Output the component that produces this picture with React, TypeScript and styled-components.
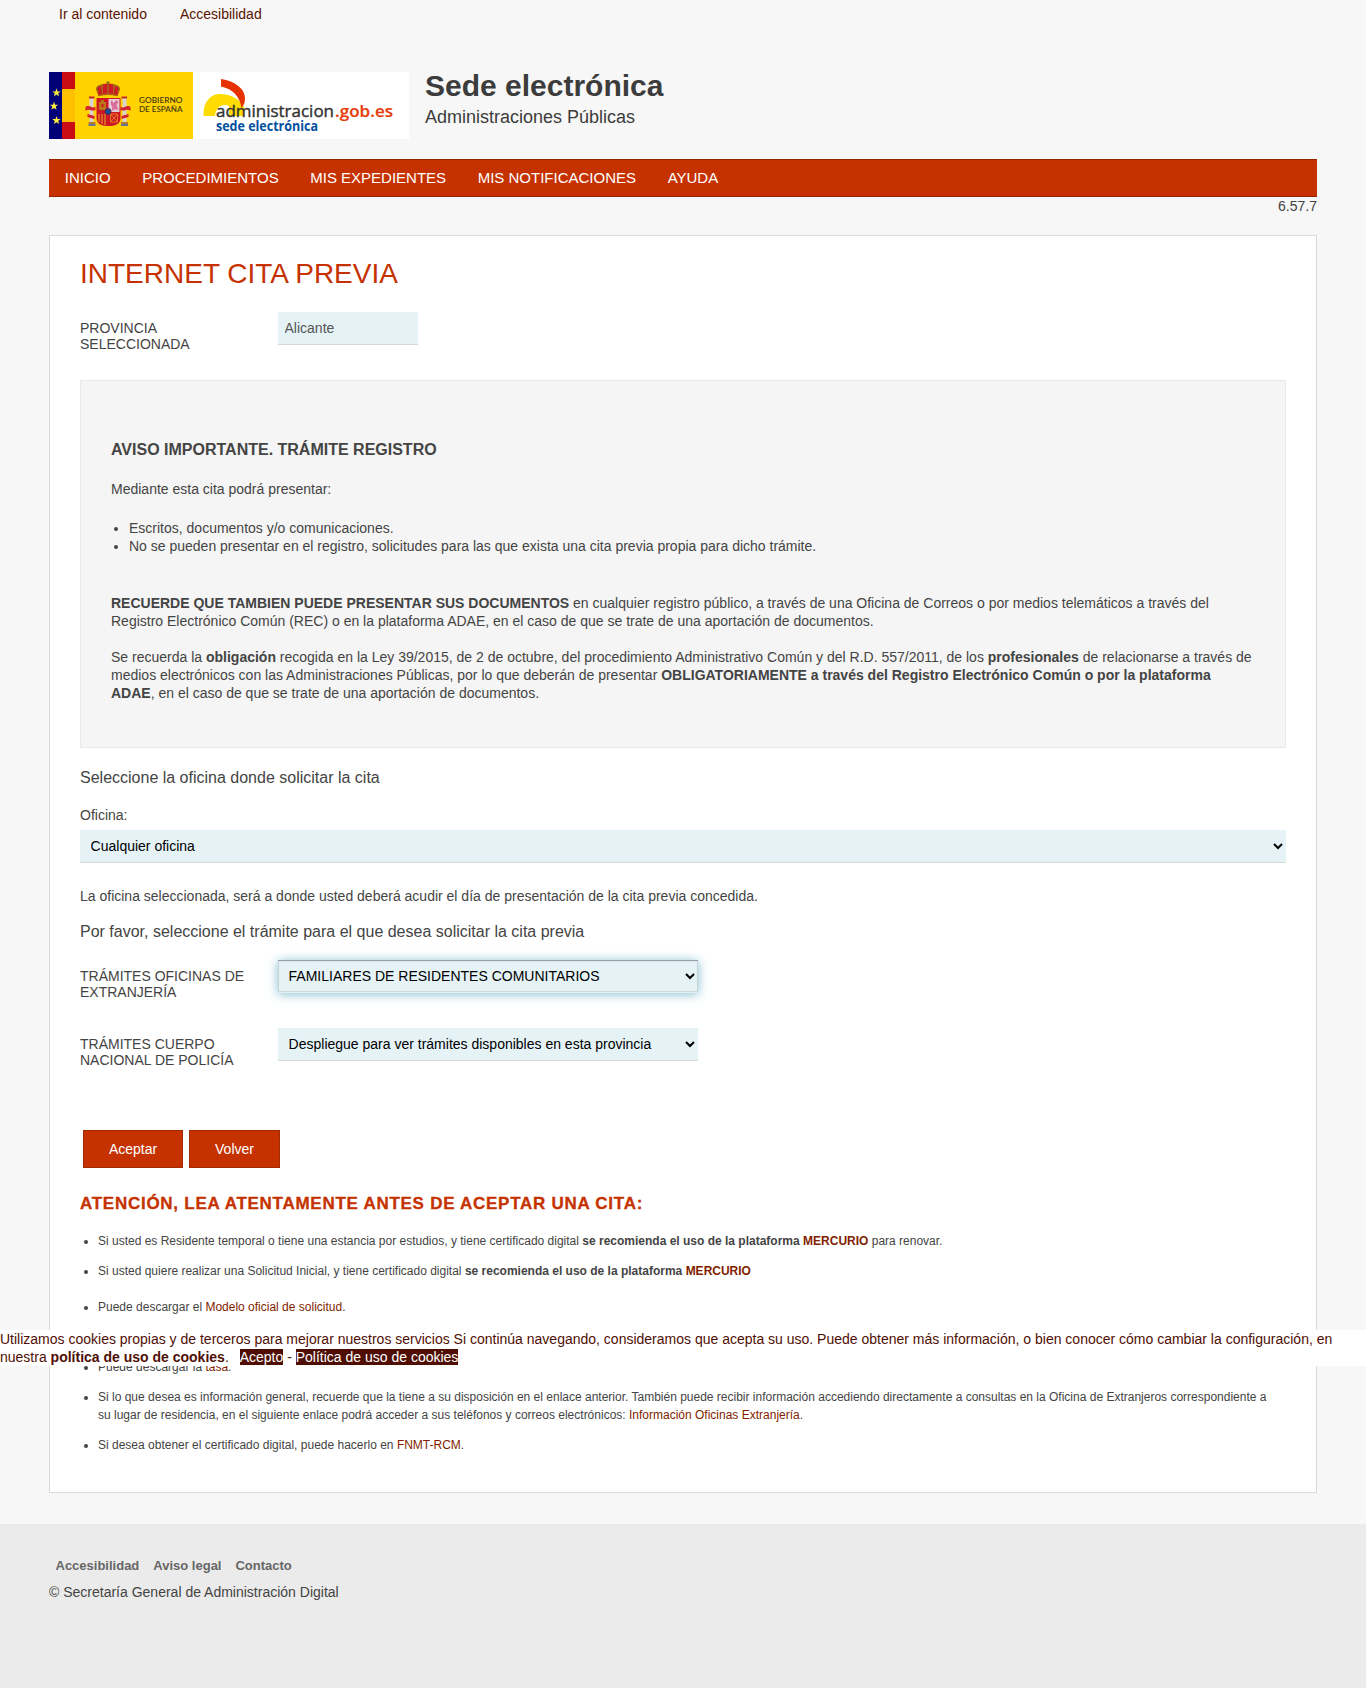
import React from 'react';
import styled, { createGlobalStyle, css } from 'styled-components';

const GlobalStyle = createGlobalStyle`
  body {
    margin: 0;
    background: #f7f7f7;
    color: #444;
    font: 14px/18px "Liberation Sans", Arial, sans-serif;
  }
  a { color: #811e00; text-decoration: none; }
`;

const Page = styled.div`
  display: flex;
  flex-direction: column;
  min-height: 1688px;
`;
const Container = styled.div`
  width: 1268px;
  margin: 0 auto;
`;
const SkipLinks = styled.nav`
  display: flex;
  gap: 33px;
  height: 72px;
  padding: 5px 0 0 10px;
  box-sizing: border-box;
  a { color: #5a1400; }
`;
const Brand = styled.header`
  display: flex;
  gap: 16px;
  height: 87px;
`;
const BrandTitle = styled.div`
  display: flex;
  flex-direction: column;
  color: #3c3c3c;
`;
const SiteName = styled.strong`
  font-size: 30px;
  line-height: 34px;
  margin-top: -3px;
`;
const SiteSub = styled.span`
  font-size: 18px;
  line-height: 28px;
`;
const MainNav = styled.nav`
  display: flex;
  height: 38px;
  box-sizing: border-box;
  background: #c53200;
  border: solid #952600;
  border-width: 1px 0;
  a {
    padding: 0 15.8px;
    color: #fff;
    font-size: 15px;
    line-height: 36px;
  }
`;
const Version = styled.div`
  height: 38px;
  text-align: right;
`;
const Card = styled.main`
  box-sizing: border-box;
  height: 1258px;
  padding: 22px 30px 0;
  background: #fff;
  border: 1px solid #d9d9d9;
`;
const Title = styled.h1`
  margin: 0;
  font-size: 28px;
  font-weight: 400;
  line-height: 32px;
  color: #c53200;
`;
const Field = styled.div<{ $top: number }>`
  display: flex;
  align-items: flex-start;
  height: 33px;
  margin-top: ${p => p.$top}px;
`;
const FieldLabel = styled.label`
  width: 198px;
  padding: 8px 30px 0 0;
  box-sizing: border-box;
  line-height: 16px;
`;
const control = css`
  box-sizing: border-box;
  height: 33px;
  border: 0;
  border-bottom: 1px solid #d5d9da;
  border-radius: 0;
  background-color: #e5f3f7;
  font: 14px "Liberation Sans", Arial, sans-serif;
  outline: 0;
`;
const ReadOnly = styled.input`
  ${control}
  width: 140px;
  padding: 0 6.5px;
  color: #555;
`;
const Select = styled.select<{ $width: string; $active?: boolean }>`
  ${control}
  width: ${p => p.$width};
  padding: 0 1px 0 6.6px;
  color: #000;
  ${p => p.$active && css`
    border-bottom-color: #e3f1f5;
    box-shadow: inset 0 1px 1px #8d9a9e, inset 0 0 1px 1px rgba(0, 0, 0, 0.1), 0 1px 10px #7fbccf;
  `}
`;
const Notice = styled.section`
  box-sizing: border-box;
  height: 368px;
  margin-top: 35px;
  padding: 59px 30px 0;
  background: #f5f5f5;
  border: 1px solid #e8e8e8;
`;
const NoticeTitle = styled.h2`
  margin: 0 0 20px;
  font-size: 16px;
  line-height: 20px;
`;
const Para = styled.p<{ $top?: number }>`
  margin: ${p => p.$top || 0}px 0 0;
`;
const Bullets = styled.ul`
  margin: 21px 0 39px;
  padding: 0 0 0 18px;
`;
const Lead = styled.p<{ $top: number }>`
  margin: ${p => p.$top}px 0 0;
  font-size: 16px;
  line-height: 18px;
`;
const Buttons = styled.div`
  display: flex;
  gap: 6px;
  margin: 69px 0 0 3px;
`;
const Button = styled.button<{ $width: number }>`
  width: ${p => p.$width}px;
  height: 38px;
  padding: 0;
  border: 1px solid #a32b00;
  background: #c53200;
  color: #fff;
  font: 14px "Liberation Sans", Arial, sans-serif;
`;
const Warning = styled.h2`
  margin: 26px 0 18px;
  color: #c53200;
  font-size: 17px;
  line-height: 20px;
  letter-spacing: 0.73px;
  -webkit-text-stroke: 0.3px #c53200;
`;
const Tips = styled.ul`
  margin: 0;
  padding: 0 0 0 18px;
  font-size: 12px;
`;
const Tip = styled.li<{ $gap?: number }>`
  margin-bottom: ${p => p.$gap ?? 12}px;
`;
const CookieBar = styled.aside`
  position: fixed;
  top: 1330px;
  left: 0;
  width: 100%;
  height: 36px;
  background: #fff;
  color: #4f0f05;
`;
const CookieButton = styled.a`
  && { color: #fff; }
  background: #4f0f05;
`;
const CookieLink = styled.a`
  && { color: #4f0f05; }
  font-weight: 700;
`;
const Footer = styled.footer`
  flex: 1;
  margin-top: 31px;
  padding-top: 33px;
  background: #ebebeb;
`;
const FooterLinks = styled.nav`
  display: flex;
  gap: 14px;
  padding-left: 6.5px;
  margin-bottom: 8px;
  a { color: #666; font-size: 13px; font-weight: 700; }
`;

const Star = ({ x, y }: { x: number; y: number }) => (
  <path
    transform={`translate(${x} ${y})`}
    fill="#ffee3d"
    d="M0-4.4 1-1.3H4.3L1.7.6 2.6 3.8 0 1.9-2.6 3.8-1.7.6-4.3-1.3H-1Z"
  />
);

const Logo = () => (
  <svg width="360" height="67" viewBox="0 0 360 67">
    <rect width="360" height="67" fill="#fff" />
    <rect width="13" height="67" fill="#000078" />
    <rect x="13" width="13" height="67" fill="#c90c14" />
    <rect x="13" y="17" width="13" height="33" fill="#ffc000" />
    <rect x="26" width="118" height="67" fill="#ffd200" />
    <Star x={7.5} y={20.7} />
    <Star x={5} y={34} />
    <Star x={7.5} y={48.3} />
    <g transform="translate(35.5 9)">
      <path d="M5 17h4v24H5zM38 17h4v24h-4z" fill="#d9d3cb" />
      <path d="M4.500 15.500h5.500v2H4.500zM37 15.500h5.500v2H37z" fill="#c3282a" />
      <path d="M4 41h7v2H4zM36.500 41h7v2h-7z" fill="#b7792d" />
      <path d="M4 43h7v2H4zM36.500 43h7v2h-7z" fill="#68758a" />
      <path d="M1 26c4-3 6 2 10 0v3c-4 2-6-2-10 1zM46 26c-4-3-6 2-10 0v3c4 2 6-2 10 1zM3 33l7 2v3l-7-2zM44 33l-7 2v3l7-2z" fill="#d2202c" />
      <path d="M12 17h24v20q0 8-12 8T12 37z" fill="#ce1624" />
      <path d="M24 18h11v13H24z" fill="#e3ccd8" />
      <path d="m27 19 2 3 3-3 2 2-2 3 2 5-3-1-4 2 1-4-2-3z" fill="#dc6d9a" />
      <path d="M14.500 21h2v-2h3v2h2v8h-7z" fill="#b77714" />
      <path d="M17 23h2v3h-2z" fill="#ce1624" />
      <path d="M14.500 33v8M17.500 33v10M20.500 33v11" stroke="#dc9a22" strokeWidth="1.2" />
      <path d="M26 33h7v8h-7zM26 33l7 8M33 33l-7 8" fill="none" stroke="#e07a22" />
      <circle cx="23.500" cy="30.500" r="3" fill="#174f92" stroke="#5a2552" />
      <path d="M14 15 12 9q-1-4 4-5 4-2 7.500-1 4-1 7.500 1 5 1 4 5l-2 6q-9.500-2-19 0z" fill="#cc1b23" />
      <path d="M14 14.500q9.500-3 19 0M14 11Q9 6 18 4q-1 4 0 8M33 11q5-5-4-7 1 4 0 8M23.500 3v9" fill="none" stroke="#a36b18" strokeWidth="1.400" />
      <path d="M23.500 0v4M21.500 2h4" stroke="#775116" />
    </g>
    <g fill="#493b12" fontFamily="Lato, sans-serif" fontSize="7.700" fontWeight="600">
      <text x="90" y="31" textLength="43.500" lengthAdjust="spacingAndGlyphs">GOBIERNO</text>
      <text x="90" y="40" textLength="43.500" lengthAdjust="spacingAndGlyphs">DE ESPAÑA</text>
    </g>
    <path d="M154.500 44C154 29 162 22 171 22c11 0 20 5 24.500 14v8H180V34c-7-3-13 1-14 10z" fill="#ffdc00" />
    <path d="M172 7c14 2 24 10 24 19 0 4-1 7-3.500 10C191 25 184 17 172 14.500z" fill="#e63200" />
    <g fontFamily="'Open Sans', sans-serif">
      <text x="167" y="45" fontSize="17" fontWeight="500" fill="#333" stroke="#333" strokeWidth=".4" textLength="118" lengthAdjust="spacingAndGlyphs">administracion</text>
      <text x="286" y="45" fontSize="17" fontWeight="600" fill="#e63c0a" stroke="#e63c0a" strokeWidth=".2" textLength="58" lengthAdjust="spacing">.gob.es</text>
      <text x="167" y="59" fontSize="13.500" fontWeight="700" fill="#004f9f" textLength="102" lengthAdjust="spacingAndGlyphs">sede electrónica</text>
    </g>
  </svg>
);

export default function App() {
  return (
    <Page>
      <GlobalStyle />
      <Container>
        <SkipLinks>
          <a href="#contenido">Ir al contenido</a>
          <a href="#accesibilidad">Accesibilidad</a>
        </SkipLinks>
        <Brand>
          <Logo />
          <BrandTitle>
            <SiteName>Sede electrónica</SiteName>
            <SiteSub>Administraciones Públicas</SiteSub>
          </BrandTitle>
        </Brand>
        <MainNav>
          {['INICIO', 'PROCEDIMIENTOS', 'MIS EXPEDIENTES', 'MIS NOTIFICACIONES', 'AYUDA'].map(t => (
            <a href="#menu" key={t}>{t}</a>
          ))}
        </MainNav>
        <Version>6.57.7</Version>
        <Card id="contenido">
          <Title>INTERNET CITA PREVIA</Title>
          <Field $top={22}>
            <FieldLabel>PROVINCIA SELECCIONADA</FieldLabel>
            <ReadOnly value="Alicante" readOnly />
          </Field>
          <Notice>
            <NoticeTitle>AVISO IMPORTANTE. TRÁMITE REGISTRO</NoticeTitle>
            <Para>Mediante esta cita podrá presentar:</Para>
            <Bullets>
              <li>Escritos, documentos y/o comunicaciones.</li>
              <li>No se pueden presentar en el registro, solicitudes para las que exista una cita previa propia para dicho trámite.</li>
            </Bullets>
            <Para>
              <b>RECUERDE QUE TAMBIEN PUEDE PRESENTAR SUS DOCUMENTOS</b> en cualquier registro público, a través de una Oficina de Correos o por medios telemáticos a través del<br />
              Registro Electrónico Común (REC) o en la plataforma ADAE, en el caso de que se trate de una aportación de documentos.
            </Para>
            <Para $top={18}>
              Se recuerda la <b>obligación</b> recogida en la Ley 39/2015, de 2 de octubre, del procedimiento Administrativo Común y del R.D. 557/2011, de los <b>profesionales</b> de relacionarse a través de<br />
              medios electrónicos con las Administraciones Públicas, por lo que deberán de presentar <b>OBLIGATORIAMENTE a través del Registro Electrónico Común o por la plataforma<br />
              ADAE</b>, en el caso de que se trate de una aportación de documentos.
            </Para>
          </Notice>
          <Lead $top={21}>Seleccione la oficina donde solicitar la cita</Lead>
          <Para $top={19}>Oficina:</Para>
          <Field $top={6}>
            <Select $width="100%"><option>Cualquier oficina</option></Select>
          </Field>
          <Para $top={24}>La oficina seleccionada, será a donde usted deberá acudir el día de presentación de la cita previa concedida.</Para>
          <Lead $top={18}>Por favor, seleccione el trámite para el que desea solicitar la cita previa</Lead>
          <Field $top={19}>
            <FieldLabel>TRÁMITES OFICINAS DE EXTRANJERÍA</FieldLabel>
            <Select $width="420px" $active><option>FAMILIARES DE RESIDENTES COMUNITARIOS</option></Select>
          </Field>
          <Field $top={35}>
            <FieldLabel>TRÁMITES CUERPO NACIONAL DE POLICÍA</FieldLabel>
            <Select $width="420px"><option>Despliegue para ver trámites disponibles en esta provincia</option></Select>
          </Field>
          <Buttons>
            <Button $width={100}>Aceptar</Button>
            <Button $width={91}>Volver</Button>
          </Buttons>
          <Warning>ATENCIÓN, LEA ATENTAMENTE ANTES DE ACEPTAR UNA CITA:</Warning>
          <Tips>
            <Tip>Si usted es Residente temporal o tiene una estancia por estudios, y tiene certificado digital <b>se recomienda el uso de la plataforma <a href="#mercurio">MERCURIO</a></b> para renovar.</Tip>
            <Tip $gap={18}>Si usted quiere realizar una Solicitud Inicial, y tiene certificado digital <b>se recomienda el uso de la plataforma <a href="#mercurio">MERCURIO</a></b></Tip>
            <Tip $gap={42}>Puede descargar el <a href="#modelo">Modelo oficial de solicitud</a>.</Tip>
            <Tip>Puede descargar la <a href="#tasa">tasa</a>.</Tip>
            <Tip>
              Si lo que desea es información general, recuerde que la tiene a su disposición en el enlace anterior. También puede recibir información accediendo directamente a consultas en la Oficina de Extranjeros correspondiente a<br />
              su lugar de residencia, en el siguiente enlace podrá acceder a sus teléfonos y correos electrónicos: <a href="#oficinas">Información Oficinas Extranjería</a>.
            </Tip>
            <Tip>Si desea obtener el certificado digital, puede hacerlo en <a href="#fnmt">FNMT-RCM</a>.</Tip>
          </Tips>
        </Card>
      </Container>
      <Footer>
        <Container>
          <FooterLinks>
            <a href="#accesibilidad">Accesibilidad</a>
            <a href="#aviso">Aviso legal</a>
            <a href="#contacto">Contacto</a>
          </FooterLinks>
          © Secretaría General de Administración Digital
        </Container>
      </Footer>
      <CookieBar>
        Utilizamos cookies propias y de terceros para mejorar nuestros servicios Si continúa navegando, consideramos que acepta su uso. Puede obtener más información, o bien conocer cómo cambiar la configuración, en<br />
        nuestra <CookieLink href="#cookies">política de uso de cookies</CookieLink>. &nbsp; <CookieButton href="#acepto">Acepto</CookieButton> - <CookieButton href="#cookies">Política de uso de cookies</CookieButton>
      </CookieBar>
    </Page>
  );
}
